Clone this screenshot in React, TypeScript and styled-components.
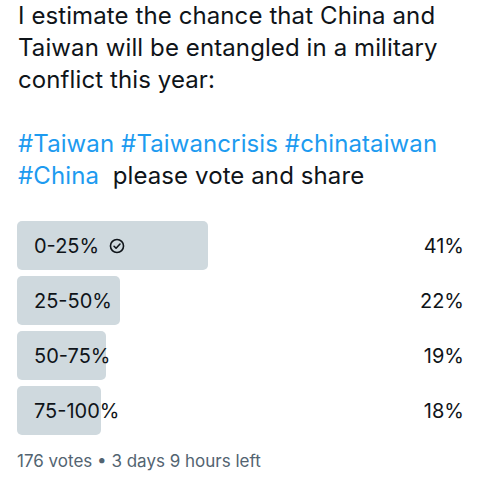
import React from 'react'
import styled, { createGlobalStyle } from 'styled-components'

const GlobalStyle = createGlobalStyle`
  html, body {
    margin: 0;
    padding: 0;
    background: #ffffff;
  }
  body {
    font-family: Inter, Roboto, "Liberation Sans", sans-serif;
    color: #0f1419;
  }
`

type Option = {
  label: string
  pct: number
  chosen?: boolean
}

const options: Option[] = [
  { label: '0-25%', pct: 41, chosen: true },
  { label: '25-50%', pct: 22 },
  { label: '50-75%', pct: 19 },
  { label: '75-100%', pct: 18 },
]

const Tweet = styled.article`
  width: 466px;
  padding: 0 17px 0 17px;
`
const Body = styled.p`
  margin: 0;
  padding-left: 1px;
  font-size: 24px;
  line-height: 32px;
  letter-spacing: 0.1px;
`
const Tag = styled.span`
  color: #1d9bf0;
`
const Poll = styled.div`
  margin-top: 29px;
  display: flex;
  flex-direction: column;
  gap: 6px;
`
const Row = styled.div`
  position: relative;
  height: 49px;
  display: flex;
  align-items: center;
  justify-content: space-between;
  padding: 0 19px 0 17px;
  font-size: 20px;
`
const Fill = styled.div`
  position: absolute;
  left: 0;
  top: 0;
  bottom: 0;
  background: #cfd9de;
  border-radius: 5px;
`
const Label = styled.span`
  position: relative;
  display: flex;
  align-items: center;
  gap: 10px;
`
const Percent = styled.span`
  position: relative;
`
const Meta = styled.div`
  margin-top: 16px;
  font-size: 17px;
  color: #536471;
`

const CheckCircle = () => (
  <svg width="16" height="16" viewBox="0 0 24 24" fill="none" stroke="#0f1419" strokeWidth="2.4">
    <circle cx="12" cy="12" r="9.8" />
    <path d="M7.6 12.4l3 3 5.9-6.3" strokeLinecap="round" strokeLinejoin="round" />
  </svg>
)

const App = () => (
  <>
    <GlobalStyle />
    <Tweet>
      <Body>
        I estimate the chance that China and Taiwan will be entangled in a military conflict this year:
        <br />
        <br />
        <Tag>#Taiwan</Tag> <Tag>#Taiwancrisis</Tag> <Tag>#chinataiwan</Tag>
        <br />
        <Tag>#China</Tag>&nbsp; please vote and share
      </Body>
      <Poll>
        {options.map((o) => (
          <Row key={o.label}>
            <Fill style={{ width: `${o.pct}%` }} />
            <Label>
              {o.label}
              {o.chosen && <CheckCircle />}
            </Label>
            <Percent>{o.pct}%</Percent>
          </Row>
        ))}
      </Poll>
      <Meta>176 votes • 3 days 9 hours left</Meta>
    </Tweet>
  </>
)

export default App
